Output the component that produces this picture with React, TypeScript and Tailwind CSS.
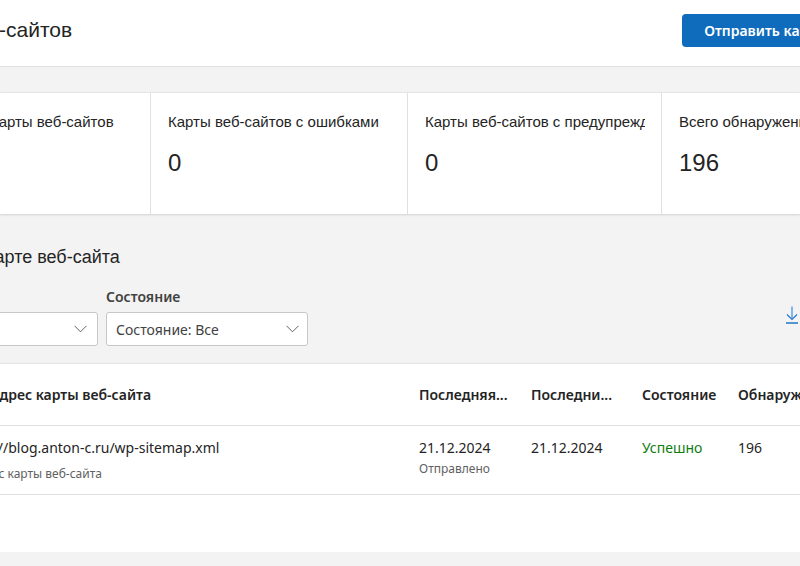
import React from "react";

const ui = { fontFamily: '"Noto Sans", "Open Sans", sans-serif' };
const ar = { fontFamily: '"Liberation Sans", Arial, sans-serif' };

function Chevron() {
  return (
    <svg width="13" height="8" viewBox="0 0 13 8" fill="none">
      <path d="M0.5 0.8 L6.5 6.8 L12.5 0.8" stroke="#616161" strokeWidth="1" />
    </svg>
  );
}

function Download() {
  return (
    <svg width="14" height="18" viewBox="0 0 14 18" fill="none">
      <path d="M7 0.5 V13" stroke="#3a8ee6" strokeWidth="1.2" />
      <path d="M2 8.5 L7 13.5 L12 8.5" stroke="#2a78cc" strokeWidth="1.2" />
      <path d="M1 17 H13" stroke="#0f6cbd" strokeWidth="1.4" />
    </svg>
  );
}

const cards = [
  { label: "Известные карты веб-сайтов", value: "1", w: "w-[255px]", shift: "-ml-[1px]" },
  { label: "Карты веб-сайтов с ошибками", value: "0", w: "w-[257px]", shift: "" },
  { label: "Карты веб-сайтов с предупреждениями", value: "0", w: "w-[254px]", shift: "" },
  { label: "Всего обнаруженных URL-адресов", value: "196", w: "w-[254px]", shift: "" },
];

export default function App() {
  return (
    <div className="w-[800px] h-[566px] overflow-hidden bg-[#f3f3f3] text-[#242424]" style={ui}>
      {/* header */}
      <div className="h-[67px] bg-white border-b border-[#e0e0e0] flex items-center overflow-hidden">
        <div className="shrink-0 -ml-[101px] text-[21px] text-[#242424] whitespace-nowrap -mt-[6px]" style={ar}>
          Карты веб-сайтов
        </div>
        <button className="ml-auto -mr-[117px] shrink-0 h-[33px] px-[22px] rounded-[4px] bg-[#0f6cbd] text-white text-[14px] font-semibold whitespace-nowrap -mt-[5px]" style={ui}>
          Отправить карту веб-сайта
        </button>
      </div>

      {/* stat cards */}
      <div className="mt-[25px] h-[122px] bg-white border-t border-[#e6e6e6] shadow-[0_1px_2px_rgba(0,0,0,0.14)] flex overflow-hidden">
        <div className="flex shrink-0 -ml-[104px]">
          {cards.map((c, i) => (
            <div key={i} className={`${c.w} shrink-0 h-full border-r border-[#e0e0e0] pl-[17px] pt-[19px]`} style={ar}>
              <div className="mr-[16px] overflow-hidden">
                <div className={`${c.shift} text-[15px] leading-[20px] whitespace-nowrap text-[#242424]`}>
                  {c.label}
                </div>
              </div>
              <div className="mt-[15px] text-[24px] leading-[32px] text-[#242424]">{c.value}</div>
            </div>
          ))}
        </div>
      </div>

      {/* details section */}
      <div className="pt-[32px] overflow-hidden">
        <div className="text-[18px] leading-[22px] whitespace-nowrap -ml-[116px] text-[#242424]" style={ar}>
          Сведения о карте веб-сайта
        </div>
        <div className="mt-[20px] flex items-end">
          <div className="flex flex-col -ml-[104px] shrink-0">
            <div className="text-[14px] font-semibold leading-[18px] text-[#424242] mb-[6px]">Тип</div>
            <div className="w-[202px] h-[34px] bg-white border border-[#c7c7c7] rounded-[3px] flex items-center justify-between px-[10px]">
              <span className="text-[14px] text-[#424242]">Тип: Все</span>
              <Chevron />
            </div>
          </div>
          <div className="flex flex-col ml-[8px] shrink-0">
            <div className="text-[14px] font-semibold leading-[18px] text-[#424242] mb-[6px]">Состояние</div>
            <div className="w-[202px] h-[34px] bg-white border border-[#c7c7c7] rounded-[3px] flex items-center justify-between pl-[9px] pr-[8px]">
              <span className="text-[14px] text-[#424242]">Состояние: Все</span>
              <Chevron />
            </div>
          </div>
          <div className="ml-auto mr-[1px] mb-[22px]">
            <Download />
          </div>
        </div>

        {/* table */}
        <div className="mt-[17px] h-[189px] bg-white border-t border-[#e6e6e6] shadow-[0_1px_2px_rgba(0,0,0,0.16)] overflow-hidden">
          <div className="h-[62px] border-b border-[#e0e0e0] flex items-center text-[14px] font-semibold text-[#242424] whitespace-nowrap">
            <div className="w-[419px] shrink-0 overflow-hidden">
              <div className="-ml-[10px]">Адрес карты веб-сайта</div>
            </div>
            <div className="w-[112px] shrink-0">Последняя...</div>
            <div className="w-[111px] shrink-0">Последни...</div>
            <div className="w-[96px] shrink-0">Состояние</div>
            <div className="shrink-0">Обнаружено URL-адресов</div>
          </div>
          <div className="h-[69px] border-b border-[#e0e0e0] flex items-start pt-[12px] text-[14px] whitespace-nowrap">
            <div className="w-[419px] shrink-0 overflow-hidden">
              <div className="-ml-[40px] leading-[20px] text-[#242424]">https://blog.anton-c.ru/wp-sitemap.xml</div>
              <div className="-ml-[38px] mt-[8px] text-[12px] leading-[16px] text-[#616161]">Индекс карты веб-сайта</div>
            </div>
            <div className="w-[112px] shrink-0">
              <div className="leading-[20px]">21.12.2024</div>
              <div className="text-[12px] leading-[16px] text-[#616161] mt-[3px]">Отправлено</div>
            </div>
            <div className="w-[111px] shrink-0 leading-[20px]">21.12.2024</div>
            <div className="w-[96px] shrink-0 leading-[20px] text-[#107c10]">Успешно</div>
            <div className="shrink-0 leading-[20px]">196</div>
          </div>
        </div>
      </div>
    </div>
  );
}
